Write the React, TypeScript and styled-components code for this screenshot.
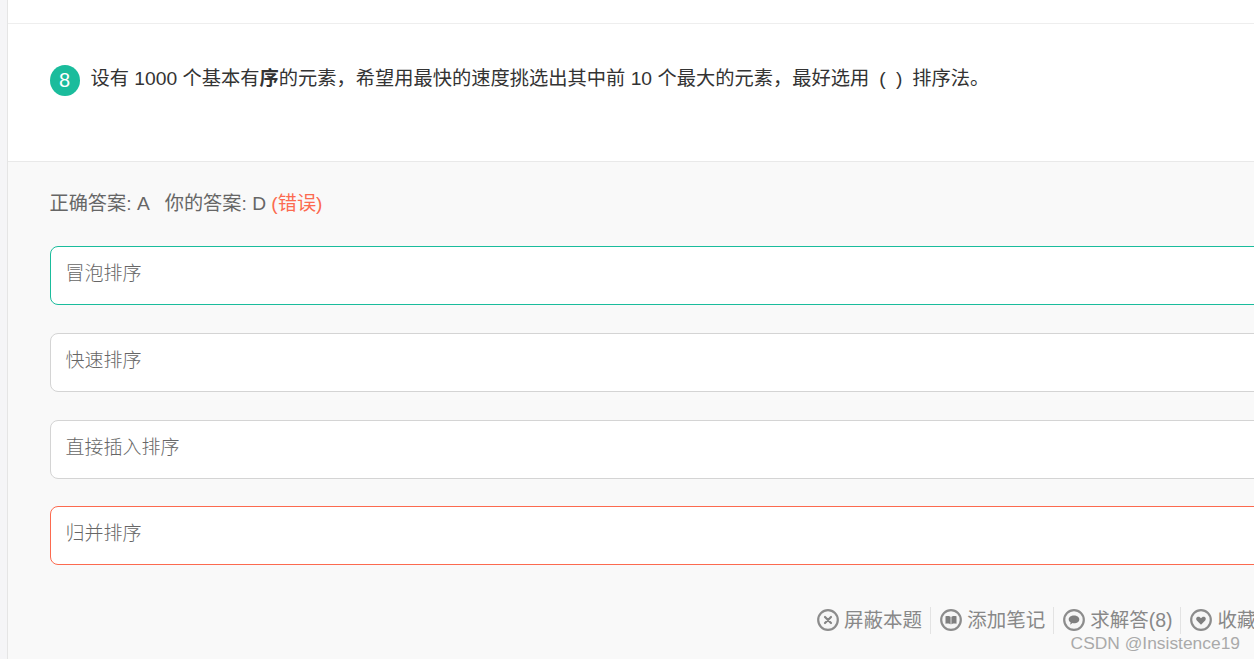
import React from 'react';
import styled, { createGlobalStyle } from 'styled-components';

const GlobalStyle = createGlobalStyle`
  html, body {
    margin: 0;
    padding: 0;
    height: 100%;
    overflow: hidden;
    background: #f5f5f7;
  }
`;

const options = [
  { text: '冒泡排序', state: 'correct' },
  { text: '快速排序', state: 'normal' },
  { text: '直接插入排序', state: 'normal' },
  { text: '归并排序', state: 'wrong' },
] as const;

const borderColors = {
  correct: '#1abc9c',
  normal: '#d4d4d4',
  wrong: '#fc6a4f',
};

const App: React.FC = () => {
  return (
    <Page>
      <GlobalStyle />
      <Panel>
        <TopStrip />
        <Question>
          <Badge>8</Badge>
          <QuestionText>
            设有 1000 个基本有<strong>序</strong>的元素，希望用最快的速度挑选出其中前 10 个最大的元素，最好选用<Blank>( )</Blank>排序法。
          </QuestionText>
        </Question>
        <Answer>
          <Result>
            正确答案: A<ResultGap />你的答案: D <Wrong>(错误)</Wrong>
          </Result>
          <OptionList>
            {options.map(option => (
              <Option key={option.text} state={option.state}>
                {option.text}
              </Option>
            ))}
          </OptionList>
          <Toolbar>
            <Action>
              <CircleIcon>
                <path d="M8 8l6 6M14 8l-6 6" stroke="#858585" strokeWidth="2.2" strokeLinecap="round" />
              </CircleIcon>
              <ActionLabel>屏蔽本题</ActionLabel>
            </Action>
            <Action>
              <CircleIcon>
                <path d="M5.5 7.2c2.200-.5 4.500-.3 5.100.7v7.500c-.8-.9-3-1.100-5.100-.6zM16.500 7.200c-2.200-.5-4.500-.3-5.100.7v7.500c.8-.9 3-1.100 5.100-.6z" fill="#7f7f7f" />
              </CircleIcon>
              <ActionLabel>添加笔记</ActionLabel>
            </Action>
            <Action>
              <CircleIcon>
                <path d="M11 6.500c3 0 5.300 1.700 5.300 3.900s-2.300 3.900-5.300 3.900c-.5 0-1-.1-1.500-.2L7.200 15.800l.4-2.500c-1.100-.7-1.900-1.700-1.900-2.900 0-2.200 2.300-3.900 5.300-3.900z" fill="#7f7f7f" />
              </CircleIcon>
              <ActionLabel>求解答(8)</ActionLabel>
            </Action>
            <Action>
              <CircleIcon>
                <path d="M11 15.800 6.800 11.400c-1.200-1.300-.5-3.600 1.500-3.600 1.200 0 2 .6 2.700 1.500.7-.9 1.500-1.500 2.700-1.500 2 0 2.700 2.300 1.500 3.600z" fill="#7f7f7f" />
              </CircleIcon>
              <ActionLabel>收藏</ActionLabel>
            </Action>
          </Toolbar>
        </Answer>
      </Panel>
      <Watermark>CSDN @Insistence19</Watermark>
    </Page>
  );
};

const CircleIcon: React.FC<{ children: React.ReactNode }> = ({ children }) => (
  <ActionIcon viewBox="0 0 22 22">
    <circle cx="11" cy="11" r="9.800" fill="#f6f6f6" stroke="#8c8c8c" strokeWidth="2.200" />
    {children}
  </ActionIcon>
);

const Page = styled.div`
  position: relative;
  width: 1254px;
  height: 659px;
  overflow: hidden;
  padding-left: 7px;
  box-sizing: border-box;
`;

const Panel = styled.div`
  width: 1300px;
  height: 659px;
  border-left: 1px solid #e5e5e5;
  background: #fff;
  font-family: 'Liberation Sans', 'Noto Sans CJK SC', sans-serif;
`;

const TopStrip = styled.div`
  height: 23px;
  border-bottom: 1px solid #eeeeee;
`;

const Question = styled.div`
  display: flex;
  align-items: flex-start;
  height: 138px;
  padding: 41px 0 0 42px;
  box-sizing: border-box;
  border-bottom: 1px solid #e9e9e9;
`;

const Badge = styled.span`
  flex: none;
  width: 30px;
  height: 31px;
  padding-right: 1px;
  box-sizing: border-box;
  border-radius: 50%;
  background: #1abc9c;
  color: #fff;
  font-size: 20px;
  line-height: 31px;
  text-align: center;
`;

const QuestionText = styled.div`
  margin-left: 10.5px;
  font-size: 19.25px;
  line-height: 28px;
  color: #333;
  strong {
    font-weight: 700;
  }
`;

const Blank = styled.span`
  margin: 0 7.5px 0 10px;
  letter-spacing: 2.5px;
`;

const Answer = styled.div`
  height: 497px;
  padding: 28px 0 0 41.5px;
  box-sizing: border-box;
  background: #f9f9f9;
`;

const Result = styled.div`
  font-size: 19.2px;
  line-height: 28px;
  color: #666;
`;

const ResultGap = styled.span`
  display: inline-block;
  width: 15px;
`;

const Wrong = styled.span`
  color: #fc6a4f;
`;

const OptionList = styled.div`
  display: flex;
  flex-direction: column;
  gap: 27.67px;
  margin: 28.2px 0 0 0.5px;
`;

const Option = styled.div<{ state: keyof typeof borderColors }>`
  height: 59px;
  padding: 0 14.5px;
  box-sizing: border-box;
  border: 1px solid ${props => borderColors[props.state]};
  border-radius: 8px;
  background: #fff;
  font-size: 19px;
  font-weight: 300;
  line-height: 53px;
  color: #666;
`;

const Toolbar = styled.div`
  display: flex;
  justify-content: flex-end;
  margin-top: 41.8px;
  padding-right: 43.5px;
`;

const Action = styled.div`
  display: flex;
  align-items: center;
  height: 27px;
  padding: 0 8px 0 9px;
  border-left: 1px solid #e3e3e3;
  font-size: 19.5px;
  color: #888;
  white-space: nowrap;
  &:first-child {
    border-left: none;
  }
`;

const ActionLabel = styled.span`
  margin-bottom: 3px;
`;

const ActionIcon = styled.svg`
  flex: none;
  width: 22px;
  height: 22px;
  margin-right: 5px;
`;

const Watermark = styled.div`
  position: absolute;
  right: 14px;
  bottom: 6px;
  font-family: 'Liberation Sans', sans-serif;
  font-size: 17.4px;
  line-height: 20px;
  color: #aaa;
`;

export default App;
